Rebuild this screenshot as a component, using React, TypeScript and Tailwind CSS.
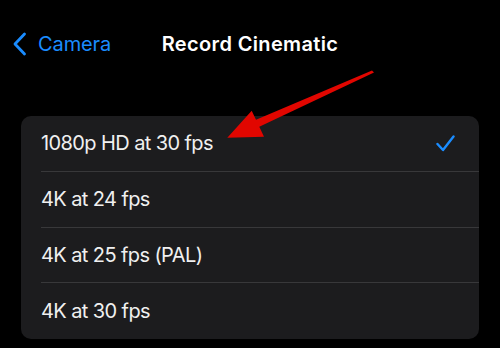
import React from 'react';

const options = ['1080p HD at 30 fps', '4K at 24 fps', '4K at 25 fps (PAL)', '4K at 30 fps'];

export default function App() {
    const selected = 0;

    return (
        <div className="relative w-[500px] h-[348px] bg-black overflow-hidden" style={{ fontFamily: 'Inter, "Noto Sans", sans-serif' }}>
            <div className="grid grid-cols-[1fr_auto_1fr] items-center h-[44px] mt-[22px]">
                <div className="flex items-center pl-[12px] text-[#1a8cff]">
                    <svg width="15" height="24" viewBox="0 0 15 24" fill="none" className="mr-[11px]">
                        <path d="M12.5 2 L3 12 L12.5 22" stroke="#1a8cff" strokeWidth="2.8" strokeLinecap="round" strokeLinejoin="round" />
                    </svg>
                    <span className="text-[20px] tracking-[-0.1px]">Camera</span>
                </div>
                <h1 className="text-[20px] font-semibold text-white tracking-[0.35px]">Record Cinematic</h1>
                <div />
            </div>

            <div className="mx-[21px] mt-[50px] bg-[#1c1c1e] rounded-[10px] overflow-hidden">
                {options.map((opt, i) => (
                    <div key={opt} className="pl-[20px]">
                        <div className={`flex items-center justify-between h-[55.75px] pr-[24px] ${i < options.length - 1 ? 'border-b border-[#38383a]' : ''}`}>
                            <span className="text-[20px] text-[#f0f0f0] tracking-[-0.6px]">{opt}</span>
                            {i === selected && (
                                <svg width="19" height="17" viewBox="0 0 19 17" fill="none">
                                    <path d="M1.5 9 L7 15 L17.5 1.5" stroke="#1a8cff" strokeWidth="2.4" strokeLinecap="round" strokeLinejoin="round" />
                                </svg>
                            )}
                        </div>
                    </div>
                ))}
            </div>

            {/* red annotation arrow */}
            <svg className="absolute left-0 top-0 pointer-events-none" width="500" height="348" viewBox="0 0 500 348">
                <path d="M372 70.6 L374 72.4 L259.3 126.8 L264 136.8 L227.3 137.8 L251.7 110.7 L256 119.8 Z" fill="#e10600" />
            </svg>
        </div>
    );
}
